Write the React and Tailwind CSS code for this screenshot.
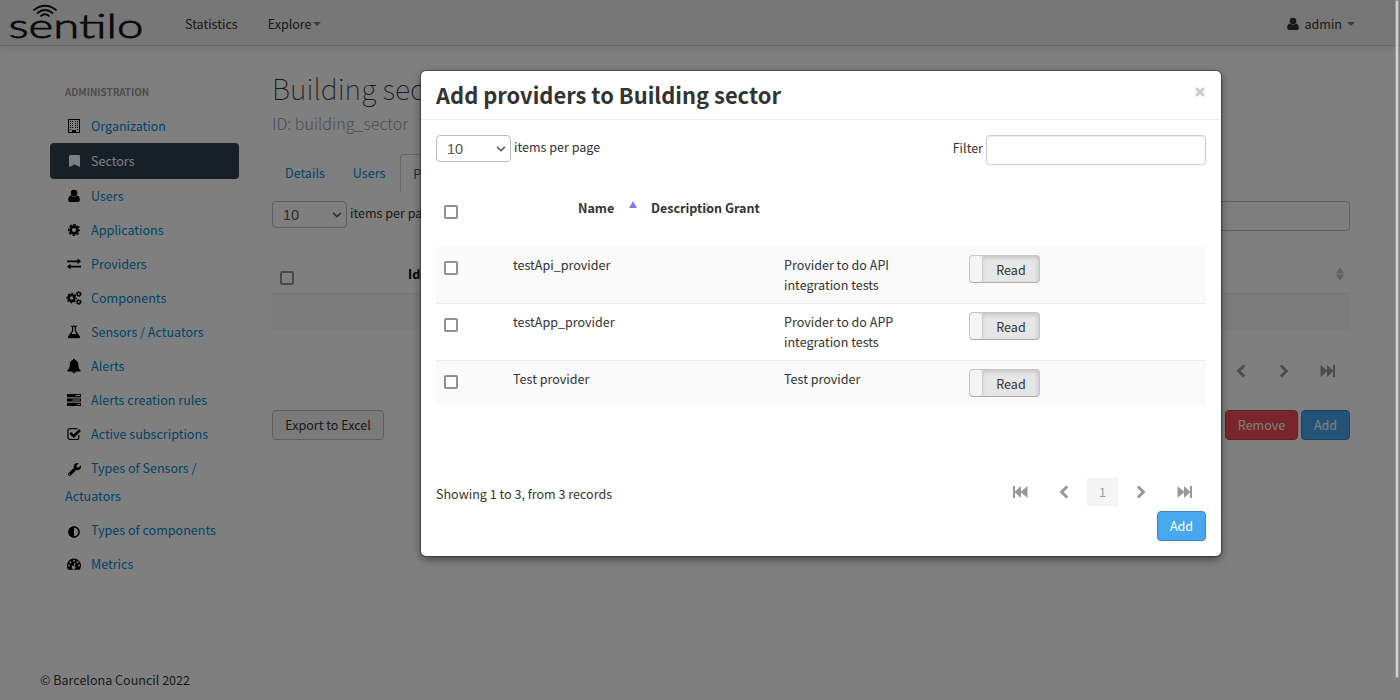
import React from "react";
import { FaBookmark, FaWrench, FaAdjust } from "react-icons/fa";
import { ChevronDown } from "lucide-react";

const FONT = "font-['Noto_Sans_CJK_JP','Noto_Sans',sans-serif]";

const icons = {
  building: (
    <g>
      <path fillRule="evenodd" d="M2 1h12v14H2zM3 2v12h3v-2h4v2h3V2z" />
      <path d="M4 3h1v1h-1zM6 3h1v1h-1zM9 3h1v1h-1zM11 3h1v1h-1zM4 5h1v1h-1zM6 5h1v1h-1zM9 5h1v1h-1zM11 5h1v1h-1zM4 7h1v1h-1zM6 7h1v1h-1zM9 7h1v1h-1zM11 7h1v1h-1zM4 9h1v1h-1zM6 9h1v1h-1zM9 9h1v1h-1zM11 9h1v1h-1zM4 11h1v1h-1zM11 11h1v1h-1z" />
    </g>
  ),
  user: (
    <g>
      <circle cx="8" cy="5" r="3.3" />
      <path d="M5 7.4Q8 9.8 11 7.4C13 7.7 13.8 9.6 13.8 11.7C13.8 13.2 12.9 14 11.6 14H4.4C3.1 14 2.2 13.2 2.2 11.7C2.2 9.6 3 7.7 5 7.4z" />
    </g>
  ),
  cog: (
    <g fill="none" stroke="currentColor">
      <circle cx="8" cy="8" r="3.4" strokeWidth="2.6" />
      <circle cx="8" cy="8" r="5.3" strokeWidth="1.6" strokeDasharray="2.5 1.66" strokeDashoffset="1.25" />
    </g>
  ),
  exchange: (
    <path d="M1 4.4h10.5V2.4L15 5.3l-3.500 2.900V6.200H1zM15 9.700H4.500V7.800L1 10.700l3.500 2.900V11.500H15z" />
  ),
  cogs: (
    <g fill="none" stroke="currentColor">
      <circle cx="5.600" cy="8" r="2.900" strokeWidth="2.200" />
      <circle cx="5.600" cy="8" r="4.500" strokeWidth="1.400" strokeDasharray="2.100 1.430" strokeDashoffset="1" />
      <circle cx="12.800" cy="4" r="1.700" strokeWidth="1.300" />
      <circle cx="12.800" cy="4" r="2.500" strokeWidth="0.900" strokeDasharray="1.400 1.200" />
      <circle cx="12.800" cy="12" r="1.700" strokeWidth="1.300" />
      <circle cx="12.800" cy="12" r="2.500" strokeWidth="0.900" strokeDasharray="1.400 1.200" />
    </g>
  ),
  flask: (
    <path fillRule="evenodd" d="M5.200 1.800h5.600v1.200h-.8v3.800l3.900 5.700c.6.900 0 1.700-.9 1.700H3c-.9 0-1.500-.8-.9-1.700L6 6.800V3h-.8zM7.200 3v4.200L5.300 10h5.400L8.800 7.200V3z" />
  ),
  bell: (
    <path d="M8 .8c.6 0 1 .4.900 1.100 2.300.5 3.400 2.300 3.400 4.500 0 3.200.8 4.800 2.500 6.200 0 .6-.4.900-.9.900H9.700a1.700 1.700 0 0 1-3.400 0H2.100c-.5 0-.9-.3-.9-.9 1.700-1.400 2.500-3 2.500-6.200 0-2.200 1.100-4 3.400-4.500C7 1.200 7.400.8 8 .8z" />
  ),
  tasks: (
    <path fillRule="evenodd" d="M1 2h14v3.200H1zM9.500 3.100v1H14v-1zM1 6.400h14v3.200H1zM6.500 7.500v1H14v-1zM1 10.800h14V14H1zM11.500 11.900v1H14v-1z" />
  ),
  check: (
    <g fill="none" stroke="currentColor">
      <path d="M12.800 9v2.500a2 2 0 0 1-2 2H3.900a2 2 0 0 1-2-2V4.600a2 2 0 0 1 2-2h7.500" strokeWidth="1.200" />
      <path d="M4.300 6.800L7.800 10.200L14 4" strokeWidth="2.500" />
    </g>
  ),
  gauge: (
    <path fillRule="evenodd" d="M8 2.600a7 7 0 0 1 7 7c0 1.400-.4 2.700-1.100 3.800-.2.200-.4.400-.7.400H2.800c-.3 0-.5-.2-.7-.4A7 7 0 0 1 8 2.600zM3 8.600a1 1 0 1 0 0 2 1 1 0 0 0 0-2zm1.500-3.400a1 1 0 1 0 0 2 1 1 0 0 0 0-2zM8 3.700a1 1 0 1 0 0 2 1 1 0 0 0 0-2zm3.500 1.500a1 1 0 1 0 0 2 1 1 0 0 0 0-2zM13 8.600a1 1 0 1 0 0 2 1 1 0 0 0 0-2zM8.700 6.500L7.600 9.800a1.700 1.700 0 1 0 1 .3l1.100-3.300z" />
  ),
};

function Glyph({ name, className }) {
  return (
    <svg viewBox="0 0 16 16" fill="currentColor" className={className || "size-4"}>
      {icons[name]}
    </svg>
  );
}

const menu = [
  ["Organization", <Glyph name="building" />],
  ["Sectors", <FaBookmark className="h-3 w-[11px]" preserveAspectRatio="none" />, true],
  ["Users", <Glyph name="user" />],
  ["Applications", <Glyph name="cog" />],
  ["Providers", <Glyph name="exchange" />],
  ["Components", <Glyph name="cogs" />],
  ["Sensors / Actuators", <Glyph name="flask" />],
  ["Alerts", <Glyph name="bell" />],
  ["Alerts creation rules", <Glyph name="tasks" />],
  ["Active subscriptions", <Glyph name="check" />],
  ["Types of Sensors / Actuators", <FaWrench className="size-[13px]" />],
  ["Types of components", <FaAdjust className="size-3" />],
  ["Metrics", <Glyph name="gauge" />],
];

function Logo() {
  return (
    <svg viewBox="0 0 136 45" className="h-[45px] w-[136px]" fill="none" stroke="#111" strokeLinecap="round">
      <text x="0.500" y="38" textLength="135" lengthAdjust="spacingAndGlyphs" fontSize="34" strokeWidth="0.800" fill="#111" className="font-['Lato'] font-light">
        sentilo
      </text>
      <path d="M26 10Q37 1.500 48 10" strokeWidth="1.800" />
      <path d="M29.500 13Q37 7 44.500 13" strokeWidth="1.800" />
      <path d="M33 16Q37 12.500 41 16" strokeWidth="1.800" />
    </svg>
  );
}

function Caret() {
  return (
    <svg viewBox="0 0 8 4" className="h-1 w-2 fill-[#777]">
      <path d="M0 0h8L4 4z" />
    </svg>
  );
}

function Check() {
  return <span className="block size-3.5 rounded-[2px] border-2 border-[#8f8f9d] bg-white" />;
}

function PageSize() {
  return (
    <div className="flex items-start">
      <div className="flex h-[27px] w-[75px] items-center justify-between rounded border border-[#bbb] bg-white pr-[2px] pl-[10px] font-['Liberation_Sans',sans-serif] text-[14.500px] text-[#555]">
        10
        <ChevronDown className="size-3.5" strokeWidth={2.6} />
      </div>
      <span className="ml-[3px] pt-[2px]">items per page</span>
    </div>
  );
}

function Pager({ kind }) {
  if (kind === "prev" || kind === "next") {
    return (
      <svg viewBox="0 0 10 14" className={kind === "next" ? "h-3.5 w-2.5 rotate-180" : "h-3.5 w-2.5"} fill="none" stroke="#999" strokeWidth="3">
        <path d="M8.200 1.500L2.600 7L8.200 12.500" />
      </svg>
    );
  }
  return (
    <svg viewBox="0 0 15 12" className={kind === "last" ? "h-3 w-[15px] rotate-180" : "h-3 w-[15px]"} fill="#999">
      <path d="M0 0h2v5.500L8 0v5.500L14.500 0v12L8 6.500V12L2 6.500V12H0z" />
    </svg>
  );
}

function Sort() {
  return (
    <svg viewBox="0 0 8 14" className="h-3.5 w-2 fill-[#c4c4c4]">
      <path d="M0 6.500h8L4 0zM0 7.500h8L4 14z" />
    </svg>
  );
}

function Toggle() {
  return (
    <div className="flex h-7 w-[71px] overflow-hidden rounded border border-[#c5c5c5] border-b-[#aaa] bg-[#e6e6e6]">
      <div className="w-[13px] rounded border-r border-[#ccc] bg-[#f5f5f5]" />
      <div className="flex flex-1 items-center justify-center pt-px shadow-[inset_-1px_2px_4px_rgba(0,0,0,0.15)]">Read</div>
    </div>
  );
}

const rows = [
  ["testApi_provider", "Provider to do API integration tests", "h-14 bg-[#fafafa]"],
  ["testApp_provider", "Provider to do APP integration tests", "h-[57px] border-t border-[#eee]"],
  ["Test provider", "Test provider", "h-[45px] border-t border-[#eee] bg-[#fafafa]"],
];

function Modal() {
  return (
    <div className="h-[485px] w-[800px] rounded-[5px] bg-white shadow-[0_3px_9px_rgba(0,0,0,0.5),0_0_0_1px_rgba(0,0,0,0.3)]">
      <div className="flex h-[49px] items-center justify-between border-b border-[#eee] px-[15px]">
        <h2 className="text-[21.900px] leading-[30px] font-bold">Add providers to Building sector</h2>
        <svg viewBox="0 0 10 10" className="mr-px mb-[7px] size-2.5" stroke="#ccc" strokeWidth="3">
          <path d="M1 1l8 8M9 1L1 9" />
        </svg>
      </div>
      <div className="px-[15px] pt-[15px]">
        <div className="flex h-[59px] items-start justify-between">
          <PageSize />
          <div className="flex">
            <span className="mr-[3px] pt-[3px]">Filter</span>
            <div className="h-[30px] w-[220px] rounded border border-[#ccc] bg-white shadow-[inset_0_1px_1px_rgba(0,0,0,0.08)]" />
          </div>
        </div>
        <div className="flex h-[53px] pt-1 pl-2 font-bold">
          <div className="w-[134px] pt-[7px]"><Check /></div>
          <span className="w-[51px]">Name</span>
          <svg viewBox="0 0 8 7" className="mt-[3px] mr-[14px] h-[7px] w-2 fill-[#7a7ee0]"><path d="M0 7h8L4 0z" /></svg>
          <span className="relative whitespace-pre">
            <span className="absolute top-[3px] left-[52px] opacity-60"><Sort /></span>
            <span className="relative">Description Grant</span>
          </span>
        </div>
        <div className="h-[173px] pt-0">
          {rows.map(([name, desc, cls]) => (
            <div key={name} className={"flex pl-2 " + cls}>
              <div className="w-[69px] pt-[14px]"><Check /></div>
              <div className="w-[271px] pt-2">{name}</div>
              <div className="w-[185px] pt-2 pr-14">{desc}</div>
              <div className="pt-2"><Toggle /></div>
            </div>
          ))}
        </div>
        <div className="flex h-[86px] items-end justify-between">
          <span className="pb-[2px]">Showing 1 to 3, from 3 records</span>
          <div className="mr-[14px] flex h-7 items-center">
            <Pager kind="first" />
            <span className="ml-[31px] flex"><Pager kind="prev" /></span>
            <span className="mx-[18px] flex h-7 w-[31px] items-center justify-center bg-[#f5f5f5] text-[#999]">1</span>
            <Pager kind="next" />
            <span className="ml-[31px] flex"><Pager kind="last" /></span>
          </div>
        </div>
        <div className="mt-[5px] flex justify-end">
          <div className="flex h-[30px] w-[49px] items-center justify-center rounded border border-[#3a87c8] bg-[#47a8f0] text-white">Add</div>
        </div>
      </div>
    </div>
  );
}

export default function App() {
  return (
    <div className={"relative h-[700px] w-[1400px] overflow-hidden bg-white text-[12.550px] leading-5 text-[#333] " + FONT}>
      <header className="flex h-[46px] items-center border-b border-[#d0d0d0] bg-[#eeeeee] pr-[45px] pl-2 shadow-[0_1px_10px_rgba(0,0,0,0.12)]">
        <Logo />
        <span className="ml-[41px] pt-[3px]">Statistics</span>
        <span className="ml-[30px] flex items-center gap-px pt-[3px]">Explore <Caret /></span>
        <span className="ml-auto flex items-center pt-[3px]">
          <Glyph name="user" className="size-4" />
          <span className="mr-[5px] ml-[3px]">admin</span>
          <Caret />
        </span>
      </header>
      <div className="flex h-[624px]">
        <nav className="ml-[50px] w-[189px] pt-9">
          <div className="mb-[7px] px-[15px] text-[9.850px] font-bold text-[#999]">ADMINISTRATION</div>
          {menu.map(([label, icon, active]) => (
            <div
              key={label}
              className={
                active
                  ? "flex h-9 items-center rounded bg-[#2e3e4e] px-[15px] text-white"
                  : "px-[15px] py-[3px] leading-7 text-[#0088cc]"
              }
            >
              <span className={active ? "mr-[9px] ml-px inline-flex w-4 justify-center" : "mr-[9px] ml-px inline-flex h-4 w-4 items-center justify-center align-[-3px] text-black"}>{icon}</span>
              {label}
            </div>
          ))}
        </nav>
        <main className="ml-[33px] flex w-[1078px] flex-col pt-[22px]">
          <h1 className="text-[28.500px] leading-10 font-thin">Building sector</h1>
          <div className="text-[16.100px] leading-[30px] font-light text-[#999]">ID: building_sector</div>
          <div className="mt-4 flex h-[38px] items-center text-[#0088cc]">
            <span className="ml-[13px]">Details</span>
            <span className="mr-[15px] ml-7">Users</span>
            <span className="flex h-[38px] items-center rounded-t border border-b-0 border-[#ccc] px-3 text-[#555]">Providers</span>
          </div>
          <div className="mt-[9px] flex justify-between">
            <PageSize />
            <div className="h-[30px] w-[220px] rounded border border-[#bbb]" />
          </div>
          <div className="mt-[29px] flex h-[33px] items-start pl-2">
            <div className="w-[128px] pt-[11px]"><Check /></div>
            <span className="pt-1 font-bold text-black">Identifier</span>
            <span className="mt-[7px] mr-[6px] ml-auto"><Sort /></span>
          </div>
          <div className="h-[37px] border-t border-[#eee] bg-[#f9f9f9]" />
          <div className="mt-[34px] flex items-center justify-end pr-[15px]">
            <span className="mr-[33px]"><Pager kind="prev" /></span>
            <span className="mr-[31px]"><Pager kind="next" /></span>
            <Pager kind="last" />
          </div>
          <div className="mt-8 flex gap-[3px] text-white">
            <div className="mr-auto flex h-[30px] w-28 items-center justify-center rounded border border-[#bbb] bg-[#f5f5f5] text-[#333]">Export to Excel</div>
            <div className="flex h-[30px] w-[73px] items-center justify-center rounded border border-[#c9434b] bg-[#f04c56]">Remove</div>
            <div className="flex h-[30px] w-[49px] items-center justify-center rounded border border-[#3a87c8] bg-[#47a8f0]">Add</div>
          </div>
        </main>
      </div>
      <footer className="pl-10">© Barcelona Council 2022</footer>
      <div className="absolute inset-0 flex items-start bg-black/50 pt-[71px] pl-[421px]">
        <Modal />
      </div>
      <div className="absolute top-0 right-px h-[678px] w-[4px] border border-[#999] bg-[#d0d0d0]" />
    </div>
  );
}
